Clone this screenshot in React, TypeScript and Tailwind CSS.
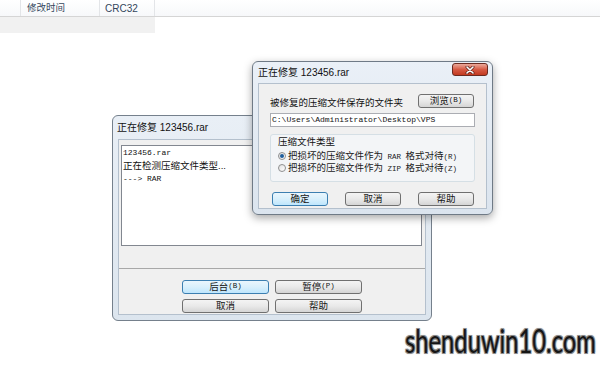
import clsx from "clsx";
import type { ReactNode } from "react";

const mono = "font-['Liberation_Mono','Noto_Sans_CJK_SC',monospace]";

const Btn = ({
  children,
  focused,
  className,
}: {
  children: ReactNode;
  focused?: boolean;
  className?: string;
}) => (
  <div
    className={clsx(
      "flex items-center justify-center rounded-[3px] border text-[9.5px] leading-none text-[#151515]",
      focused
        ? "border-[#3c7fb1] bg-linear-to-b from-[#eaf6fd] via-[#d9f0fc] to-[#bee6fd]"
        : "border-[#707070] bg-linear-to-b from-[#f4f4f4] via-[#e9e9e9] to-[#d5d5d5]",
      className,
    )}
  >
    {children}
  </div>
);

const Radio = ({ checked, children }: { checked?: boolean; children: ReactNode }) => (
  <div className="flex h-[12px] items-center gap-[2px]">
    <span className="flex h-[8px] w-[8px] items-center justify-center rounded-full border border-[#8e8f8f] bg-linear-to-br from-[#e0e0e0] to-[#ffffff]">
      {checked && <span className="h-[4px] w-[4px] rounded-full bg-[#1f5e9c]" />}
    </span>
    <span className="text-[9.5px] leading-none text-[#1a1a1a]">{children}</span>
  </div>
);

const CloseButton = () => (
  <div className="mt-[1px] flex h-[13px] w-[36px] items-center justify-center self-start rounded-[3px] border border-[#6a2a20] bg-linear-to-b from-[#eaa99b] via-[#d65a44] to-[#c2391f]">
    <svg width="10" height="8" viewBox="0 0 10 8">
      <path d="M2 1 L8 7 M8 1 L2 7" stroke="#5a2018" strokeWidth="3" strokeLinecap="round" />
      <path d="M2 1 L8 7 M8 1 L2 7" stroke="#ffffff" strokeWidth="1.6" strokeLinecap="round" />
    </svg>
  </div>
);

export default function App() {
  return (
    <div className="relative h-[369px] w-[600px] overflow-hidden bg-white font-['Liberation_Sans','Noto_Sans_CJK_SC',sans-serif]">
      {/* list header */}
      <div className="flex h-[17px] border-b border-[#d5d5d5] bg-linear-to-b from-white to-[#f7f8fa] text-[10px] text-[#34465c]">
        <div className="w-[21px] border-r border-[#e3e5e8]" />
        <div className="flex w-[79px] items-center border-r border-[#e3e5e8] pl-[6px] text-[9.5px]">修改时间</div>
        <div className="flex w-[55px] items-center border-r border-[#e3e5e8] pl-[5px]">CRC32</div>
      </div>
      <div className="h-[16px] w-[155px] bg-[#f1f1f1]" />

      {/* background window */}
      <div className="absolute left-[112px] top-[115px] flex h-[206px] w-[320px] flex-col rounded-[6px] border border-[#75808c] bg-linear-to-b from-[#e9eff6] to-[#dce5ee]">
        <div className="flex h-[23px] items-center pl-[4px] text-[10px] text-[#111]">正在修复 123456.rar</div>
        <div className="mx-[5px] mb-[5px] flex flex-1 flex-col border border-[#b4c0cd] bg-[#f0f0f0]">
          <div className="ml-[2px] mr-[3px] mt-[5px] h-[101px] border border-[#828790] bg-white pl-[1px] text-[9.5px] leading-[13px] text-[#111]">
            <div className={clsx(mono, "text-[8px]")}>123456.rar</div>
            <div>正在检测压缩文件类型...</div>
            <div className={clsx(mono, "text-[8px]")}>---&gt; RAR</div>
          </div>
          <div className="mt-[22px] border-t border-[#a8a8a8] border-b-white" />
          <div className="mx-auto mt-[11px] grid grid-cols-[87px_87px] gap-x-[6px] gap-y-[5px]">
            <Btn focused className="h-[14px]">
              后台<span className={clsx(mono, "text-[7.5px]")}>(B)</span>
            </Btn>
            <Btn className="h-[14px]">
              暂停<span className={clsx(mono, "text-[7.5px]")}>(P)</span>
            </Btn>
            <Btn className="h-[14px]">取消</Btn>
            <Btn className="h-[14px]">帮助</Btn>
          </div>
        </div>
      </div>

      {/* foreground window */}
      <div className="absolute left-[252px] top-[61px] flex h-[154px] w-[241px] flex-col rounded-[6px] border border-[#6f7a86] bg-linear-to-b from-[#eaf0f7] to-[#dbe4ee] shadow-[0_3px_8px_rgba(0,0,0,0.35)]">
        <div className="flex h-[21px] items-center pl-[5px] pr-[4px]">
          <span className="text-[10px] text-[#111]">正在修复 123456.rar</span>
          <div className="ml-auto flex self-start">
            <CloseButton />
          </div>
        </div>
        <div className="mx-[5px] mb-[5px] flex flex-1 flex-col border border-[#b4c0cd] bg-[#f0f0f0] pl-[11px] pr-[11px]">
          <div className="mt-[10px] flex items-start justify-between">
            <span className="mt-[3px] text-[9.5px] leading-[12px] text-[#111]">被修复的压缩文件保存的文件夹</span>
            <Btn className="mr-[1px] h-[14px] w-[56px]">
              浏览<span className={clsx(mono, "text-[7.5px]")}>(B)</span>
            </Btn>
          </div>
          <div className={clsx(mono, "mt-[4px] flex h-[14px] items-center border border-[#abadb3] bg-white pl-[1px] text-[8px] text-[#111]")}>
            C:\Users\Administrator\Desktop\VPS
          </div>
          <div className="mt-[7px] flex flex-col rounded-[3px] border border-[#d5dfe5] bg-[#f3f5f7] pb-[7px] pl-[7px] pt-[1px]">
            <span className="h-[12px] text-[9.5px] leading-[12px] text-[#111]">压缩文件类型</span>
            <div className="mt-[2px] flex flex-col">
              <Radio checked>
                把损坏的压缩文件作为<span className={clsx(mono, "text-[7.5px]")}> RAR </span>格式对待<span className={clsx(mono, "text-[7.5px]")}>(R)</span>
              </Radio>
              <Radio>
                把损坏的压缩文件作为<span className={clsx(mono, "text-[7.5px]")}> ZIP </span>格式对待<span className={clsx(mono, "text-[7.5px]")}>(Z)</span>
              </Radio>
            </div>
          </div>
          <div className="mt-[10px] flex justify-between pl-[2px] pr-[1px]">
            <Btn focused className="h-[14px] w-[56px]">确定</Btn>
            <Btn className="h-[14px] w-[56px]">取消</Btn>
            <Btn className="h-[14px] w-[56px]">帮助</Btn>
          </div>
        </div>
      </div>

      {/* watermark */}
      <div className="absolute left-[405px] top-[324px] origin-left scale-x-[0.72] whitespace-nowrap font-['Lato','Open_Sans',sans-serif] text-[33px] leading-none text-[#151515] [text-shadow:1px_1px_0_#8a8a8a,-1px_-1px_0_#8a8a8a,1px_-1px_0_#8a8a8a,-1px_1px_0_#8a8a8a,0_0_3px_#9a9a9a]">
        shenduwin10.com
      </div>
    </div>
  );
}
